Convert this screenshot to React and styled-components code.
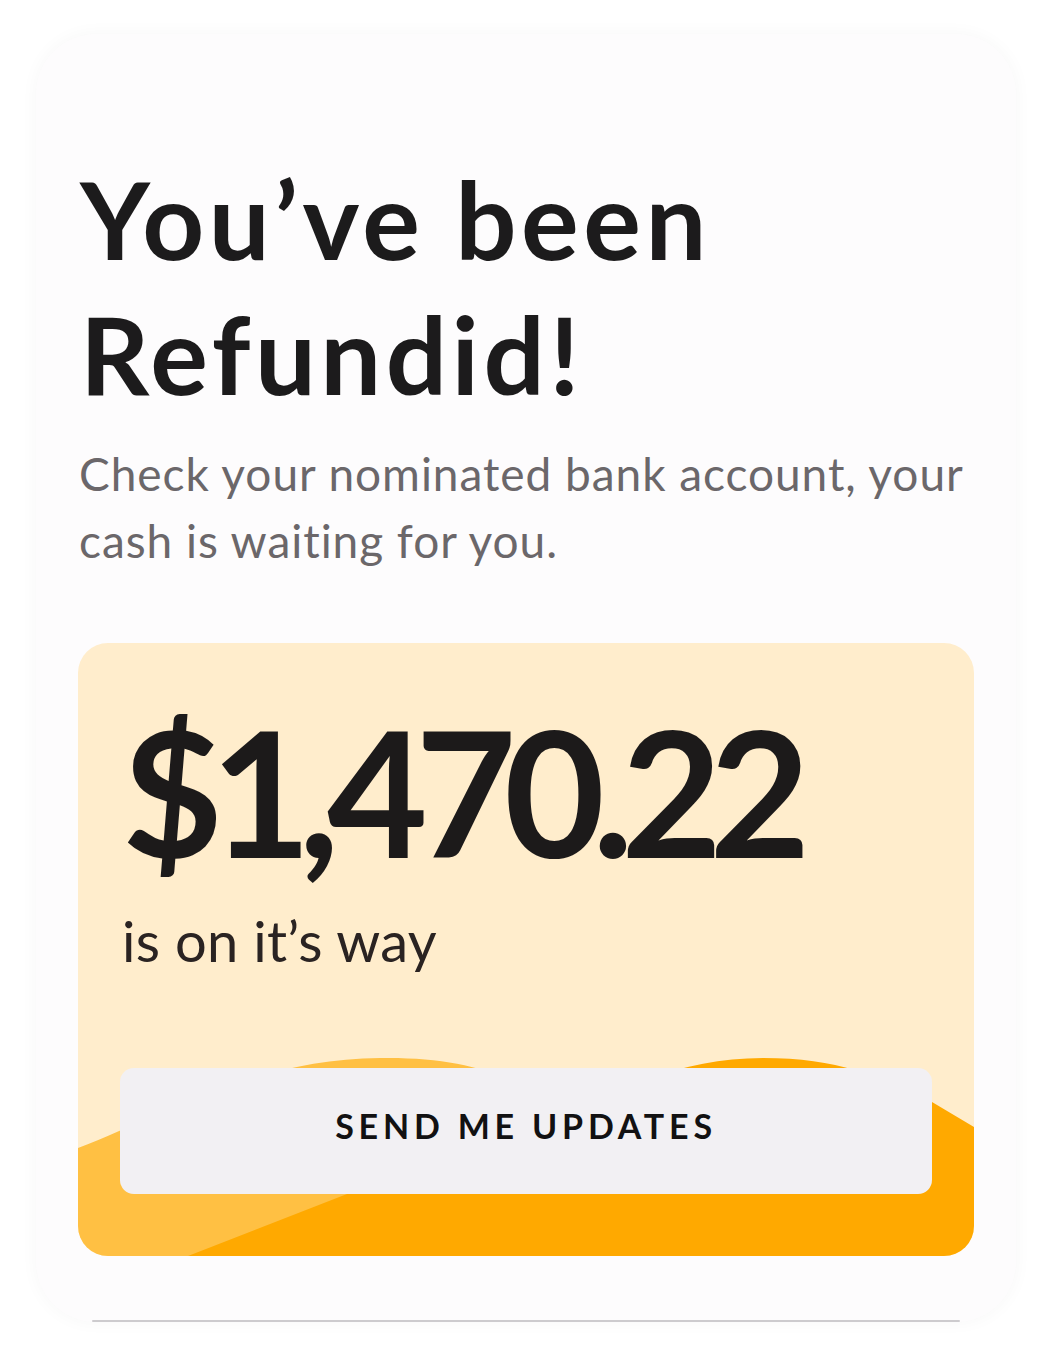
import React from "react";
import styled, { createGlobalStyle } from "styled-components";

const Global = createGlobalStyle`
  html, body { margin: 0; padding: 0; background: #ffffff; }
  body { font-family: "Lato", "Noto Sans", sans-serif; }
`;

const Page = styled.div`
  width: 1048px;
  height: 1356px;
  overflow: hidden;
  padding: 34px 32px 0 36px;
  box-sizing: border-box;
`;

const Card = styled.div`
  width: 980px;
  height: 1288px;
  box-sizing: border-box;
  background: #fdfcfd;
  border-radius: 60px;
  box-shadow: 0 0 18px rgba(0, 0, 0, 0.035);
  padding: 117px 42px 0 42px;
  display: flex;
  flex-direction: column;
`;

const Title = styled.h1`
  margin: 0 0 0 2px;
  font-family: "Lato", sans-serif;
  font-weight: 700;
  font-size: 108px;
  line-height: 135px;
  color: #1c1b1c;
  letter-spacing: 4.5px;
`;

const Lead = styled.p`
  margin: 19px 0 0 1px;
  font-family: "Lato", sans-serif;
  font-size: 46px;
  line-height: 67px;
  color: #6b676a;
  letter-spacing: 0.95px;
`;

const AmountBox = styled.div`
  position: relative;
  margin-top: 69px;
  width: 896px;
  height: 613px;
  box-sizing: border-box;
  background: #ffedcc;
  border-radius: 30px;
  overflow: hidden;
  padding: 48px 42px 62px 42px;
  display: flex;
  flex-direction: column;
`;

const Amount = styled.div`
  font-family: "Lato", sans-serif;
  font-weight: 700;
  font-size: 174px;
  line-height: 200px;
  color: #1c1a1a;
  letter-spacing: -12.5px;
  margin-left: 2px;
`;

const Sub = styled.div`
  margin-top: 20px;
  font-family: "Lato", sans-serif;
  font-size: 56px;
  line-height: 60px;
  color: #2a2322;
  margin-left: 2px;
  letter-spacing: 0.3px;
`;

const Wave = styled.svg`
  position: absolute;
  left: 0;
  bottom: 0;
  width: 896px;
  height: 200px;
  display: block;
`;

const Button = styled.button`
  position: relative;
  margin-top: auto;
  width: 812px;
  height: 126px;
  padding: 0 0 12px 0;
  border: none;
  border-radius: 14px;
  background: #f2f0f3;
  font-family: "Lato", sans-serif;
  font-weight: 700;
  font-size: 34px;
  letter-spacing: 4.8px;
  color: #121112;
  cursor: pointer;
`;

const Divider = styled.div`
  margin: auto 14px 0 14px;
  height: 2px;
  background: #cdcbce;
  border-radius: 1px;
`;

export default function App() {
  return (
    <>
      <Global />
      <Page>
        <Card>
          <Title>
            You’ve been
            <br />
            Refundid!
          </Title>
          <Lead>
            Check your nominated bank account, your cash is waiting for you.
          </Lead>
          <AmountBox>
            <Wave viewBox="0 0 896 200" preserveAspectRatio="none">
              <path
                d="M0,92 C80,62 170,4 302,2 C420,0 470,40 520,80 L520,200 L0,200 Z"
                fill="#ffc043"
              />
              <path
                d="M110,200 L269,138 L450,70 C540,35 600,2 685,2 C760,2 800,20 854,46 L896,71 L896,200 Z"
                fill="#ffa900"
              />
            </Wave>
            <Amount>$1,470.22</Amount>
            <Sub>is on it’s way</Sub>
            <Button>SEND ME UPDATES</Button>
          </AmountBox>
          <Divider />
        </Card>
      </Page>
    </>
  );
}
